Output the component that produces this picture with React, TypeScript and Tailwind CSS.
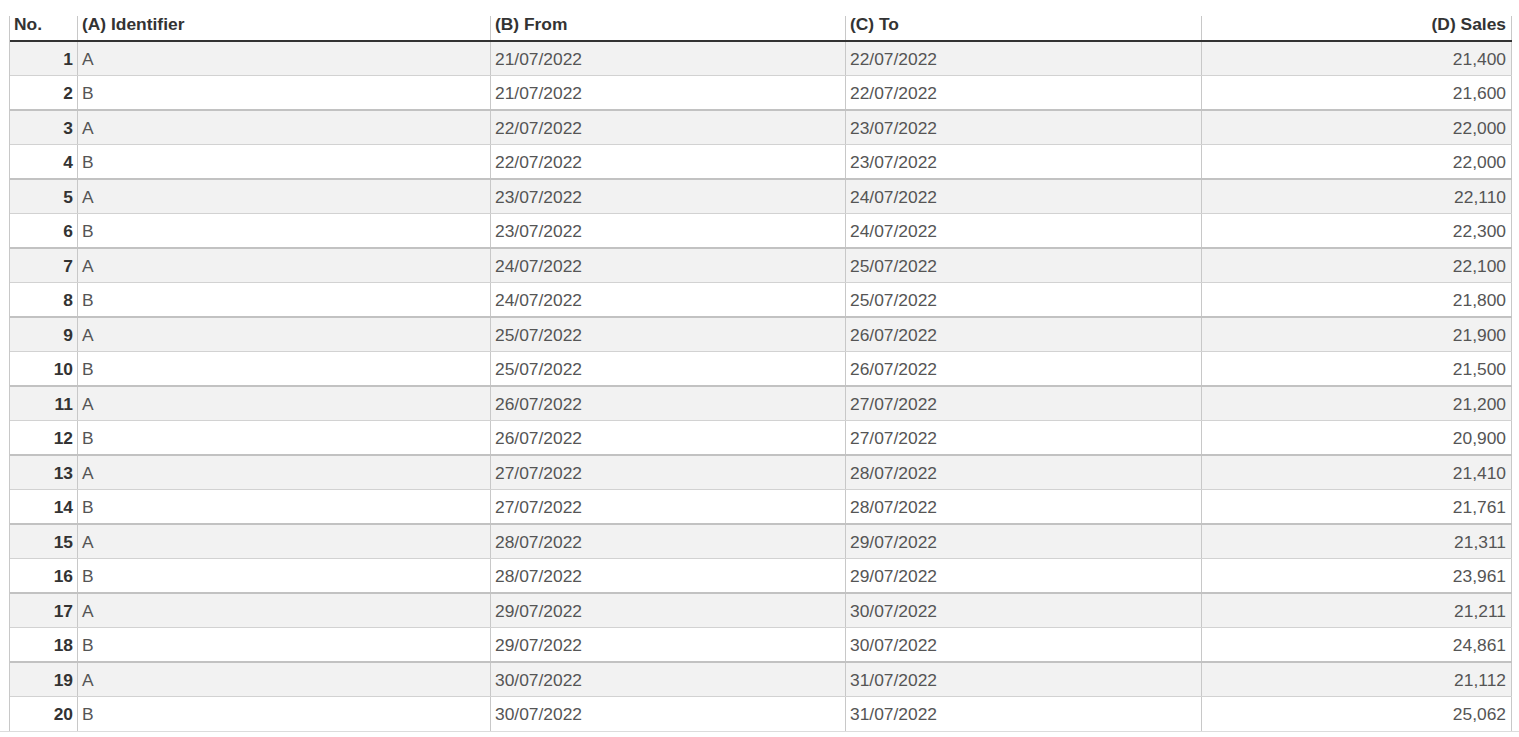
const rows: [number, string, string, string, string][] = [
  [1, 'A', '21/07/2022', '22/07/2022', '21,400'],
  [2, 'B', '21/07/2022', '22/07/2022', '21,600'],
  [3, 'A', '22/07/2022', '23/07/2022', '22,000'],
  [4, 'B', '22/07/2022', '23/07/2022', '22,000'],
  [5, 'A', '23/07/2022', '24/07/2022', '22,110'],
  [6, 'B', '23/07/2022', '24/07/2022', '22,300'],
  [7, 'A', '24/07/2022', '25/07/2022', '22,100'],
  [8, 'B', '24/07/2022', '25/07/2022', '21,800'],
  [9, 'A', '25/07/2022', '26/07/2022', '21,900'],
  [10, 'B', '25/07/2022', '26/07/2022', '21,500'],
  [11, 'A', '26/07/2022', '27/07/2022', '21,200'],
  [12, 'B', '26/07/2022', '27/07/2022', '20,900'],
  [13, 'A', '27/07/2022', '28/07/2022', '21,410'],
  [14, 'B', '27/07/2022', '28/07/2022', '21,761'],
  [15, 'A', '28/07/2022', '29/07/2022', '21,311'],
  [16, 'B', '28/07/2022', '29/07/2022', '23,961'],
  [17, 'A', '29/07/2022', '30/07/2022', '21,211'],
  [18, 'B', '29/07/2022', '30/07/2022', '24,861'],
  [19, 'A', '30/07/2022', '31/07/2022', '21,112'],
  [20, 'B', '30/07/2022', '31/07/2022', '25,062'],
];

const cols = 'grid grid-cols-[68px_413px_355px_356px_310px]';
const cell = 'flex items-center border-r border-[#c8c8c8] px-[4px] leading-[20px]';
const head = 'flex items-start border-r border-[#c8c8c8] px-[4px] leading-[16px]';

const App = () => {
  return (
    <div
      className="h-[732px] w-[1519px] overflow-hidden border-b border-[#dcdcdc] bg-white pt-[16px] text-[17.4px] text-[#555]"
      style={{ fontFamily: '"Liberation Sans", Arial, sans-serif' }}
    >
      <div className="ml-[9px] w-[1503px] border-l border-[#c8c8c8]">
        <div className={`${cols} h-[26px] border-b-2 border-[#333] font-bold text-[#333]`}>
          <div className={head}>No.</div>
          <div className={head}>(A) Identifier</div>
          <div className={head}>(B) From</div>
          <div className={head}>(C) To</div>
          <div className={`${head} justify-end pr-[5px]`}>(D) Sales</div>
        </div>
        {rows.map(([no, id, from, to, sales]) => {
          const odd = no % 2 === 1;
          const last = no === rows.length;
          return (
            <div
              key={no}
              className={`${cols} ${
                odd
                  ? 'h-[34px] border-b border-[#d2d2d2] bg-[#f2f2f2]'
                  : last
                    ? 'h-[34px] bg-white'
                    : 'h-[35px] border-b-2 border-[#c2c2c2] bg-white'
              }`}
            >
              <div className={`${cell} justify-end font-bold text-[#333]`}>{no}</div>
              <div className={cell}>{id}</div>
              <div className={cell}>{from}</div>
              <div className={cell}>{to}</div>
              <div className={`${cell} justify-end pr-[5px]`}>{sales}</div>
            </div>
          );
        })}
      </div>
    </div>
  );
};

export default App;
